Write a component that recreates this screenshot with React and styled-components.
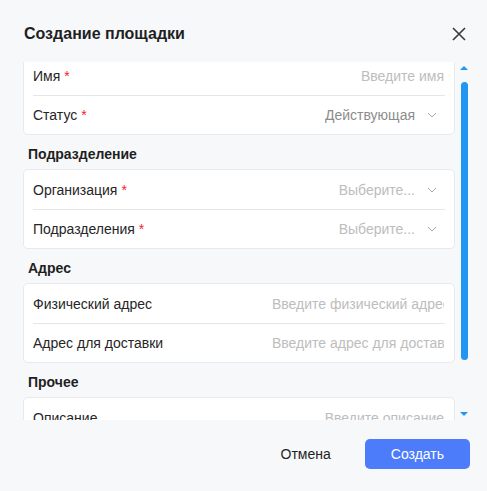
import React from "react";
import styled, { createGlobalStyle } from "styled-components";

const GlobalStyle = createGlobalStyle`
  html, body {
    margin: 0;
    padding: 0;
    background: #f7f8fa;
    font-family: "Liberation Sans", Arial, sans-serif;
  }
`;

const Modal = styled.div`
  width: 487px;
  height: 491px;
  background: #f7f8fa;
  display: flex;
  flex-direction: column;
  box-sizing: border-box;
`;

const Header = styled.div`
  height: 62px;
  display: flex;
  align-items: center;
  justify-content: space-between;
  padding: 5px 20px 0 24px;
  box-sizing: border-box;
`;

const Title = styled.h2`
  margin: 0;
  font-size: 16px;
  font-weight: 700;
  color: #1f1f1f;
`;

const CloseButton = styled.button`
  border: none;
  background: none;
  padding: 0;
  width: 16px;
  height: 16px;
  display: flex;
  align-items: center;
  justify-content: center;
  cursor: pointer;
`;

const Body = styled.div`
  height: 358px;
  display: flex;
  padding-left: 23px;
`;

const Viewport = styled.div`
  width: 432px;
  overflow: hidden;
`;

const Content = styled.div`
  margin-top: -7px;
`;

const Card = styled.div`
  background: #fff;
  border: 1px solid #e8e9ed;
  border-radius: 5px;
`;

const Row = styled.div`
  height: 39px;
  box-sizing: border-box;
  margin: 0 9px;
  display: flex;
  align-items: center;
  justify-content: space-between;
  font-size: 14px;
  & + & {
    border-top: 1px solid #e5e6ea;
  }
`;

const Label = styled.span`
  color: #262626;
  white-space: nowrap;
`;

const Required = styled.span`
  color: #f5222d;
  margin-left: 4px;
`;

const Field = styled.div`
  display: flex;
  align-items: center;
  gap: 12px;
  padding-right: ${(p) => (p.$select ? "8px" : "1px")};
`;

const Value = styled.span`
  color: ${(p) => (p.$placeholder ? "#bdbdbd" : "#8c8c8c")};
  white-space: nowrap;
  overflow: hidden;
  max-width: 172px;
`;

const SectionTitle = styled.div`
  font-size: 14px;
  font-weight: 700;
  color: #1f1f1f;
  line-height: 20px;
  padding: 9px 0 5px 5px;
`;

const ScrollTrack = styled.div`
  width: 14px;
  margin-left: 2px;
  display: flex;
  flex-direction: column;
  align-items: center;
  padding: 4px 0 0 0;
`;

const Arrow = styled.div`
  width: 0;
  height: 0;
  border-left: 4px solid transparent;
  border-right: 4px solid transparent;
  ${(p) =>
    p.$down
      ? "border-top: 4px solid #2196f3;"
      : "border-bottom: 4px solid #2196f3;"}
`;

const Thumb = styled.div`
  width: 7px;
  height: 278px;
  margin: 12px 0 52px;
  border-radius: 4px;
  background: #2196f3;
`;

const Footer = styled.div`
  flex: 1;
  display: flex;
  align-items: center;
  justify-content: flex-end;
  gap: 18px;
  padding: 0 17px 4px 0;
`;

const Button = styled.button`
  height: 30px;
  border: none;
  border-radius: 5px;
  font-family: "Liberation Sans", Arial, sans-serif;
  font-size: 14px;
  padding: 0 ${(p) => (p.$primary ? "26px" : "16px")};
  min-width: ${(p) => (p.$primary ? "105px" : "auto")};
  background: ${(p) => (p.$primary ? "#4c7cfa" : "transparent")};
  color: ${(p) => (p.$primary ? "#fff" : "#1f1f1f")};
  cursor: pointer;
`;

const Chevron = () => (
  <svg width="10" height="6" viewBox="0 0 10 6" fill="none">
    <path d="M1 1l4 4 4-4" stroke="#a6a6a6" strokeWidth="1" />
  </svg>
);

function FormRow({ label, required, value, placeholder, select }) {
  return (
    <Row>
      <Label>
        {label}
        {required && <Required>*</Required>}
      </Label>
      <Field $select={select}>
        <Value $placeholder={placeholder}>{value}</Value>
        {select && <Chevron />}
      </Field>
    </Row>
  );
}

export default function App() {
  return (
    <Modal>
      <GlobalStyle />
      <Header>
        <Title>Создание площадки</Title>
        <CloseButton aria-label="Закрыть">
          <svg width="14" height="14" viewBox="0 0 14 14">
            <path d="M1 1l12 12M13 1L1 13" stroke="#3a3a3a" strokeWidth="1.6" />
          </svg>
        </CloseButton>
      </Header>
      <Body>
        <Viewport>
          <Content>
            <Card>
              <FormRow label="Имя" required value="Введите имя" placeholder />
              <FormRow label="Статус" required value="Действующая" select />
            </Card>
            <SectionTitle>Подразделение</SectionTitle>
            <Card>
              <FormRow label="Организация" required value="Выберите..." placeholder select />
              <FormRow label="Подразделения" required value="Выберите..." placeholder select />
            </Card>
            <SectionTitle>Адрес</SectionTitle>
            <Card>
              <FormRow label="Физический адрес" value="Введите физический адрес" placeholder />
              <FormRow label="Адрес для доставки" value="Введите адрес для доставки" placeholder />
            </Card>
            <SectionTitle>Прочее</SectionTitle>
            <Card>
              <FormRow label="Описание" value="Введите описание" placeholder />
            </Card>
          </Content>
        </Viewport>
        <ScrollTrack>
          <Arrow />
          <Thumb />
          <Arrow $down />
        </ScrollTrack>
      </Body>
      <Footer>
        <Button>Отмена</Button>
        <Button $primary>Создать</Button>
      </Footer>
    </Modal>
  );
}
